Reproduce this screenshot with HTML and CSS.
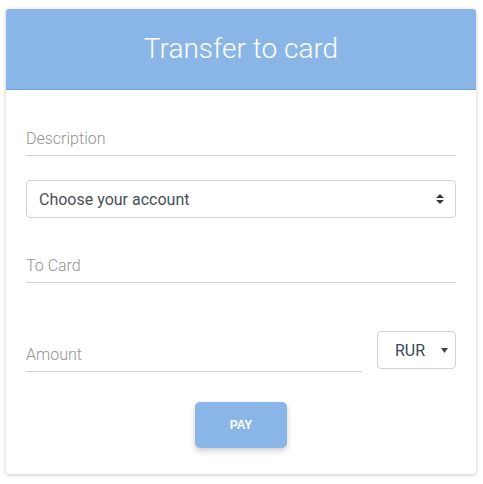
FILE: index.html
```html
<!DOCTYPE html>
<html>
<head>
<meta charset="utf-8">
<link rel="stylesheet" href="styles.css">
</head>
<body>
<div class="card">
  <div class="card-header">Transfer to card</div>
  <form class="card-body">
    <input class="line-input first" type="text" placeholder="Description">
    <div class="select-wrap account">
      <select class="box-select">
        <option>Choose your account</option>
      </select>
      <svg class="arrows" width="8" height="10" viewBox="0 0 8 10"><path d="M4 0L8 4H0z M4 10L0 6H8z" fill="#343a40"/></svg>
    </div>
    <input class="line-input card-no" type="text" placeholder="To Card">
    <div class="amount-row">
      <input class="line-input amount" type="text" placeholder="Amount">
      <div class="select-wrap currency">
        <select class="box-select cur">
          <option>RUR</option>
        </select>
        <svg class="tri" width="7" height="5" viewBox="0 0 7 5"><path d="M0 0H7L3.5 5z" fill="#444"/></svg>
      </div>
    </div>
    <div class="actions">
      <button type="button" class="pay">PAY</button>
    </div>
  </form>
</div>
</body>
</html>
```

FILE: styles.css
```css
html, body {
  margin: 0;
  padding: 0;
  background: #fff;
}
body {
  padding: 9px 7px 10px 6px;
  font-family: Roboto, "Liberation Sans", sans-serif;
}
.card {
  width: 470px;
  background: #fff;
  border-radius: 3px;
  box-shadow: 0 1px 4px rgba(0,0,0,0.22);
  overflow: hidden;
}
.card-header {
  height: 80px;
  background: #8ab6e7;
  border-bottom: 1px solid #74a3d8;
  color: #fff;
  font-weight: 300;
  font-size: 28px;
  line-height: 80px;
  text-align: center;
}
.card-body {
  display: flex;
  flex-direction: column;
  padding: 27px 20px 26px 20px;
  margin: 0;
}
.line-input {
  display: block;
  width: 100%;
  box-sizing: border-box;
  height: 39px;
  border: none;
  border-bottom: 1px solid #ced4da;
  padding: 4px 0 0 0;
  font-family: Roboto, sans-serif;
  font-size: 16px;
  color: #495057;
  background: transparent;
  outline: none;
}
.line-input::placeholder {
  color: #929292;
  font-weight: 300;
}
.select-wrap {
  position: relative;
}
.account {
  margin-top: 24px;
}
.box-select {
  -webkit-appearance: none;
  appearance: none;
  width: 100%;
  height: 38px;
  box-sizing: border-box;
  border: 1px solid #ced4da;
  border-radius: 4px;
  background: #fff;
  padding: 0 12px;
  font-family: Roboto, sans-serif;
  font-size: 16px;
  color: #495057;
  outline: none;
}
.arrows {
  position: absolute;
  right: 12px;
  top: 14px;
}
.card-no {
  margin-top: 26px;
}
.amount-row {
  display: flex;
  align-items: flex-end;
  gap: 15px;
  margin-top: 48px;
}
.amount {
  flex: 1;
}
.currency {
  width: 79px;
  margin-bottom: 3px;
}
.cur {
  padding: 0 0 0 17px;
  color: #3c4858;
}
.tri {
  position: absolute;
  right: 8px;
  top: 17px;
}
.actions {
  display: flex;
  justify-content: center;
  margin-top: 30px;
}
.pay {
  width: 92px;
  height: 46px;
  border: none;
  border-radius: 5px;
  background: #8ab6e7;
  color: #fff;
  font-family: "Liberation Sans", Arial, sans-serif;
  font-weight: 700;
  font-size: 12px;
  box-shadow: 0 3px 6px rgba(0,0,0,0.2);
}
```
